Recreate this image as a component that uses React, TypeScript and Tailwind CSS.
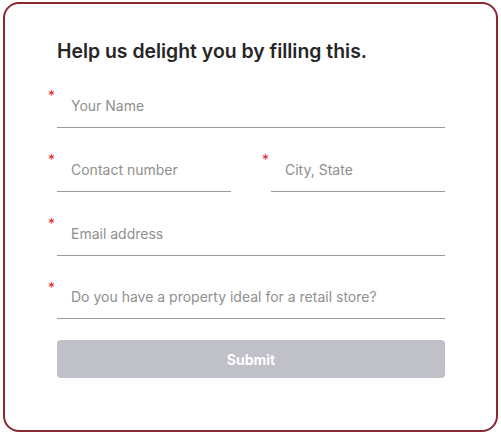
import React from "react";

function Field({ label, h = "h-[64px]" }: { label: string; h?: string }) {
  return (
    <div className={"relative flex items-end " + h}>
      <span className="absolute left-[-9px] top-[25px] text-[14px] leading-none text-[#e8212e]">*</span>
      <div className="w-full h-[44px] border-b border-[#999999] flex items-center pl-[14px] text-[14px] text-[#8f8f8f]">
        {label}
      </div>
    </div>
  );
}

export default function App() {
  return (
    <div className="w-[501px] h-[434px] bg-white pt-[2px] pl-[3px]" style={{ fontFamily: "Inter, 'Noto Sans', sans-serif" }}>
      <div className="w-[495px] h-[430px] border-[2px] border-[#8a2733] rounded-[16px] pl-[52px]">
        <div className="w-[388px]">
          <h1 className="pt-[35px] text-[19.4px] leading-[24px] font-semibold text-[#262626]">
            Help us delight you by filling this.
          </h1>
          <div className="h-[1px]" />
          <Field label="Your Name" />
          <div className="grid grid-cols-2 gap-x-[40px]">
            <Field label="Contact number" />
            <Field label="City, State" />
          </div>
          <Field label="Email address" />
          <Field label="Do you have a property ideal for a retail store?" h="h-[63px]" />
          <button className="mt-[21px] w-full h-[38px] rounded-[4px] bg-[#c0c0c9] text-white text-[14px] font-bold">
            Submit
          </button>
        </div>
      </div>
    </div>
  );
}
